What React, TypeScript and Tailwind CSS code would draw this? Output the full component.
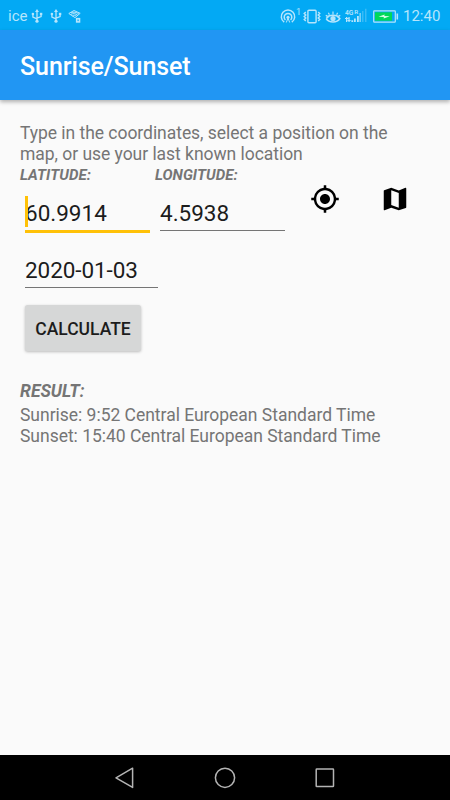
import { useState } from 'react'
import { MdMap, MdMyLocation } from 'react-icons/md'

const UsbIcon = () => (
  <svg width="12" height="14" viewBox="0 0 12 14" fill="none" stroke="currentColor" strokeWidth="1.3">
    <path d="M6 2V12M1.9 5.5V8L6 9.8M10.1 5.5V7.6L6 9.2" />
    <path d="M6 0L8 3H4Z" fill="currentColor" stroke="none" />
    <circle cx="6" cy="12.2" r="1.6" fill="currentColor" stroke="none" />
    <circle cx="1.9" cy="5" r="1.3" fill="currentColor" stroke="none" />
    <path d="M8.9 3.8h2.4v2.4H8.9z" fill="currentColor" stroke="none" />
  </svg>
)

const EyeIcon = () => (
  <svg width="16" height="15" viewBox="0 0 16 15" fill="none" stroke="currentColor" strokeWidth="1.6">
    <path d="M.9 6.2C3.5 9 3 6.2 8 6.2C13 6.2 12.5 9 15.1 6.2M1.2 9.6C4 14.2 12 14.2 14.8 9.6L12.5 7.4M1.2 9.6L3.5 7.4" />
    <path d="M8 5.6V2.6M4.4 5.8L3.4 3.8M11.6 5.8L12.6 3.8" strokeWidth="1.2" />
    <circle cx="8" cy="9.5" r="2.6" fill="currentColor" stroke="none" />
  </svg>
)

const HotspotIcon = () => (
  <svg width="16" height="15" viewBox="0 0 16 15" fill="none" stroke="currentColor" strokeWidth="1.5">
    <path d="M4.2 13.2A6.7 6.7 0 1 1 11.8 13.2" />
    <path d="M5.4 11A3.8 3.8 0 1 1 10.6 11" />
    <circle cx="8" cy="8.3" r="1.5" fill="currentColor" stroke="none" />
    <path d="M8 9L6.3 13.5M8 9L9.7 13.5" strokeWidth="1" />
  </svg>
)

const VibrateIcon = () => (
  <svg width="18" height="15" viewBox="0 0 18 15" fill="none" stroke="currentColor" strokeWidth="1.4">
    <rect x="4.9" y="1.2" width="8.2" height="12.6" rx="1" />
    <path d="M2.8 3L1.2 4.5L2.8 6L1.2 7.5L2.8 9L1.2 10.5L2.8 12M15.2 3L16.8 4.5L15.2 6L16.8 7.5L15.2 9L16.8 10.5L15.2 12" />
  </svg>
)

const SignalIcon = () => (
  <svg width="22" height="16" viewBox="0 0 22 16" fill="currentColor">
    <text x="0" y="6.6" fontSize="7.8" fontWeight="600" fontFamily="Roboto, sans-serif" textLength="8.4" lengthAdjust="spacingAndGlyphs">4G</text>
    <text x="9.2" y="6" fontSize="6.2" fontWeight="600" fontFamily="Roboto, sans-serif">R</text>
    <path d="M1 9h1.3v5H1zM0 10h3.3v1H0zM3.4 9h1.3v5H3.4zM2.6 12h3v1h-3zM6.4 12.2h1.8V14H6.4zM9 10.6h1.8V14H9zM12 8h1.8v6H12z" />
    <path opacity=".8" d="M14.5 5h1.3v9h-1.3z" />
    <path opacity=".3" d="M17 3h1.5v11H17zM20 .8h1.5V14H20z" />
  </svg>
)

const BatteryIcon = () => (
  <svg width="26" height="13" viewBox="0 0 26 13" fill="none">
    <rect x=".7" y=".9" width="21.6" height="11.2" rx=".6" stroke="currentColor" strokeWidth="1.2" />
    <rect x="2" y="2.3" width="17" height="8.4" fill="#00d85a" />
    <path d="M5.5 6.7L11.6 4.6L11.4 6L16.8 6.3L10.7 8.6L10.8 7.1Z" fill="#d9ffe8" />
    <path d="M24.3 3.5V9.5" stroke="currentColor" strokeWidth="1.6" />
  </svg>
)

// wifi layers with a small lock in the corner
const NetworkIcon = () => (
  <svg width="14" height="15" viewBox="0 0 14 15" fill="none" stroke="currentColor" strokeWidth="1">
    <path d="M.8 4.5L6 1.5L12.2 4.3L7 8.6Z" />
    <path d="M3 3.8C5.5 2.6 8.5 3.2 10.8 4.8M2.4 5.6C5 4 7.5 4.6 9.6 6M4.4 7C5.8 6 7 6.2 8.4 7" />
    <rect x="8.7" y="9.7" width="2.8" height="3.2" strokeWidth="1.6" />
  </svg>
)

const StatusBar = () => (
  <div className="flex h-[30px] items-center bg-[#03a9f4] pt-[2px] text-[#b5e5fc]">
    <span className="ml-2 w-[23px] text-[15px] leading-none">ice</span>
    <UsbIcon />
    <div className="ml-[6.5px]"><UsbIcon /></div>
    <div className="ml-[6px]"><NetworkIcon /></div>
    <div className="ml-auto flex items-center">
      <HotspotIcon />
      <span className="mb-2 w-[7px] text-[9px] leading-none">1</span>
      <VibrateIcon />
      <div className="ml-[4px]"><EyeIcon /></div>
      <div className="ml-[4px]"><SignalIcon /></div>
      <div className="ml-[6px]"><BatteryIcon /></div>
      <span className="mr-[9px] ml-[4px] w-[38px] pt-px text-[15px] leading-none whitespace-nowrap">12:40</span>
    </div>
  </div>
)

const NavBar = () => (
  <nav className="flex h-[45px] items-center justify-center gap-[76px] bg-black text-[#b4b4b4]">
    <svg width="24" height="24" viewBox="0 0 24 24" fill="none" stroke="currentColor" strokeWidth="1.5" strokeLinejoin="round">
      <path d="M3 11.8L19.6 2.2V21.4Z" />
    </svg>
    <svg width="24" height="24" viewBox="0 0 24 24" fill="none" stroke="currentColor" strokeWidth="1.5">
      <circle cx="12" cy="11.8" r="9.6" />
    </svg>
    <svg width="24" height="24" viewBox="0 0 24 24" fill="none" stroke="currentColor" strokeWidth="1.5">
      <rect x="3.2" y="3.1" width="17.3" height="17.5" rx=".6" />
    </svg>
  </nav>
)

const App = () => {
  const [latitude, setLatitude] = useState('60.9914')
  const [longitude, setLongitude] = useState('4.5938')
  const [date, setDate] = useState('2020-01-03')

  return (
    <div className="flex h-[800px] w-[450px] flex-col overflow-hidden bg-[#fafafa] font-[Roboto,sans-serif]">
      <StatusBar />
      <header className="flex h-[70px] items-center bg-[#2196f3] px-5 shadow-[0_2px_4px_rgba(0,0,0,0.3)]">
        <h1 className="pt-[3px] text-[25px] leading-[30px] font-medium tracking-[-0.08px] text-white">Sunrise/Sunset</h1>
      </header>

      <main className="flex flex-1 flex-col items-start px-5 pt-[23px] text-[17.5px] leading-[20.5px] text-[#757575]">
        <p className="tracking-[-0.04px] whitespace-nowrap">Type in the coordinates, select a position on the<br />map, or use your last known location</p>

        <div className="flex h-[76px]">
          <label className="w-[135px] text-[15px] leading-[19px] font-bold italic">
            <span className="block h-[32px] pt-[2px] tracking-[0.06px]">LATITUDE:</span>
            <div className="relative ml-[5px] w-[125px]">
              <input className="block h-[37px] w-full border-b-[3px] border-[#ffc107] text-[22.5px] font-normal text-[#1c1c1c] not-italic outline-none" value={latitude} onChange={(e) => setLatitude(e.target.value)} />
              <span className="absolute top-0 left-0 h-[31px] w-[2.5px] bg-[#ffc107]" />
            </div>
          </label>
          <label className="w-[135px] text-[15px] leading-[19px] font-bold italic">
            <span className="block h-[32px] pt-[2px] tracking-[0.06px]">LONGITUDE:</span>
            <input className="ml-[5px] block h-[35px] w-[125px] border-b border-[#757575] text-[22.5px] font-normal text-[#1c1c1c] not-italic outline-none" value={longitude} onChange={(e) => setLongitude(e.target.value)} />
          </label>
          <button className="mt-5 ml-5 size-[30px] text-black"><MdMyLocation className="size-[30px]" /></button>
          <button className="mt-5 ml-10 size-[30px] text-black"><MdMap className="size-[30px]" /></button>
        </div>

        <input className="ml-[5px] h-[48px] w-[133px] border-b border-[#757575] pt-3 text-[22.5px] tracking-[-0.08px] text-[#1c1c1c] outline-none" value={date} onChange={(e) => setDate(e.target.value)} />

        <button className="mt-[17px] ml-[5px] h-[46px] w-[116px] rounded-[2.5px] bg-[#d6d7d7] pt-[2px] text-[17.5px] font-medium text-[#1c1c1c] shadow-[0_1px_3px_rgba(0,0,0,0.25)]">CALCULATE</button>

        <h2 className="mt-[30px] leading-[21px] font-bold italic">RESULT:</h2>
        <p className="mt-[3px] tracking-[-0.02px] whitespace-nowrap">Sunrise: 9:52 Central European Standard Time<br />Sunset: 15:40 Central European Standard Time</p>
      </main>

      <NavBar />
    </div>
  )
}

export default App
